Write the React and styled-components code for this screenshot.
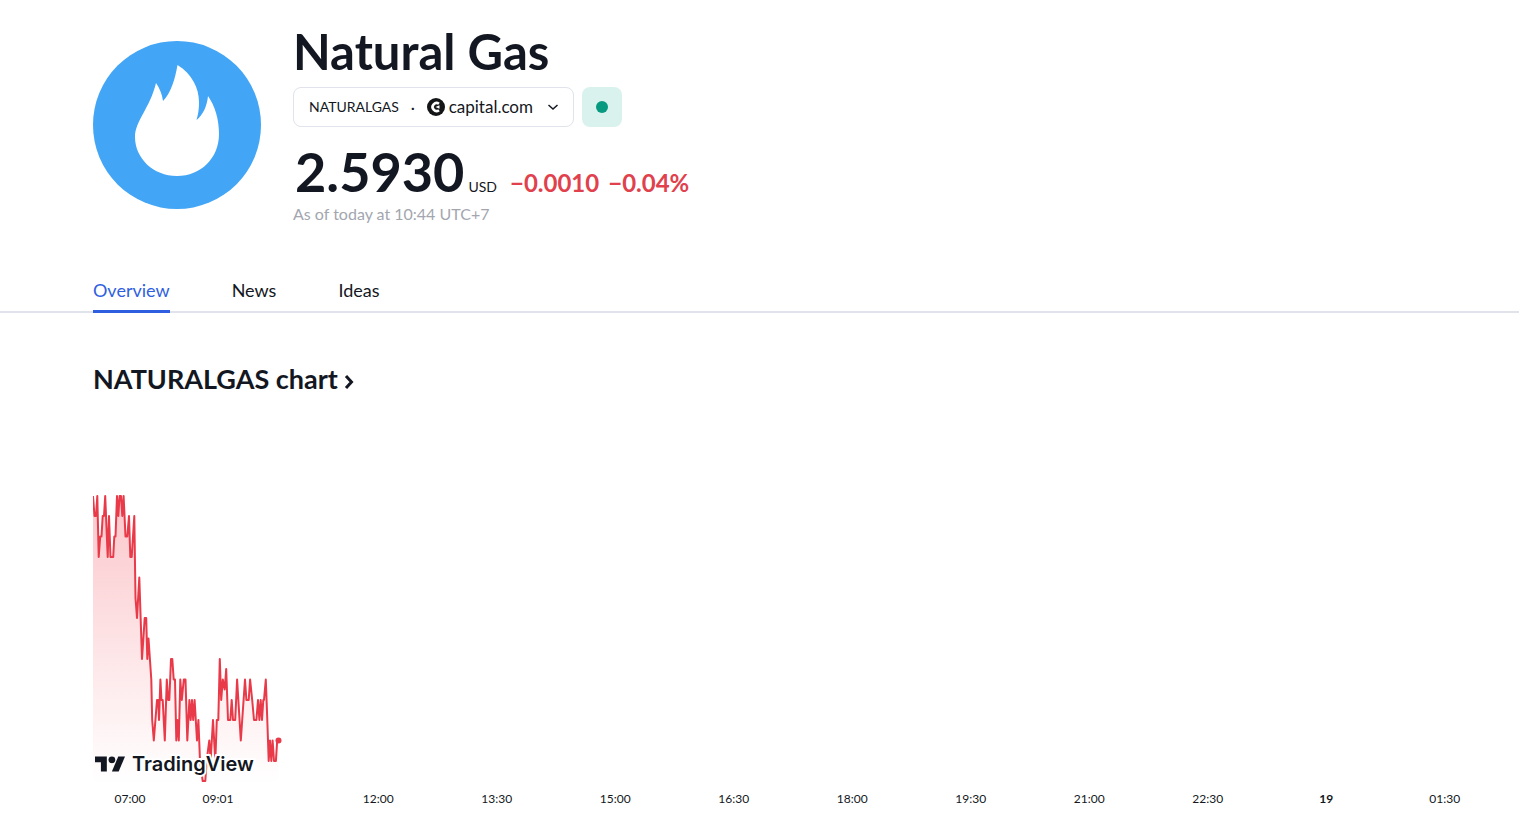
import React from "react";
import styled, { createGlobalStyle } from "styled-components";

const Global = createGlobalStyle`
  *, *::before, *::after { box-sizing: border-box; }
  body {
    margin: 0;
    background: #fff;
    color: #131722;
    font-family: Lato, "Open Sans", sans-serif;
    font-size: 16px;
    line-height: 24px;
  }
`;

const Page = styled.main`
  overflow-x: hidden;
`;

const Header = styled.header`
  display: flex;
  gap: 32px;
  padding: 23px 16px 0 93px;
`;

const SymbolLogo = styled.svg`
  flex: none;
  width: 168px;
  height: 168px;
  margin-top: 18px;
`;

const Summary = styled.div`
  display: flex;
  flex-direction: column;
  min-width: 0;
`;

const Title = styled.h1`
  margin: 0;
  font-size: 49px;
  font-weight: 700;
  line-height: 56px;
`;

const SymbolRow = styled.div`
  display: flex;
  gap: 8px;
  margin-top: 8px;
`;

const ExchangeButton = styled.button`
  display: flex;
  align-items: center;
  width: 281px;
  height: 40px;
  padding: 0 14px 0 15px;
  border: 1px solid #e0e3eb;
  border-radius: 8px;
  background: #fff;
  color: inherit;
  font: inherit;
  cursor: pointer;
`;

const Ticker = styled.span`
  font-size: 14px;
`;

const Separator = styled.span`
  flex: 1;
  text-align: center;
`;

const Exchange = styled.span`
  display: flex;
  align-items: center;
  gap: 4px;
  font-size: 17px;
`;

const Chevron = styled.svg`
  width: 12px;
  height: 8px;
  margin-left: 14px;
`;

const MarketStatus = styled.button`
  display: grid;
  place-items: center;
  width: 40px;
  height: 40px;
  padding: 0;
  border: 0;
  border-radius: 8px;
  background: #daf2ee;
  cursor: pointer;

  &::before {
    content: "";
    width: 12px;
    height: 12px;
    border-radius: 50%;
    background: #089981;
  }
`;

const Quote = styled.div`
  display: flex;
  align-items: baseline;
  margin-top: 17px;
  padding-left: 2px;
  line-height: 24px;
  white-space: nowrap;
`;

const Price = styled.span`
  font-size: 54px;
  font-weight: 700;
  line-height: 56px;
`;

const Currency = styled.span`
  margin-left: 4px;
  font-size: 14px;
`;

const Change = styled.span`
  display: flex;
  gap: 9px;
  margin-left: 13px;
  color: #e0414c;
  font-size: 24px;
  font-weight: 700;
`;

const AsOf = styled.p`
  margin: 2px 0 0;
  color: #a3a6af;
  font-size: 16px;
`;

const Tabs = styled.nav`
  display: flex;
  gap: 62px;
  margin-top: 49px;
  padding-left: 93px;
  box-shadow: inset 0 -2px #e0e3eb;
`;

const Tab = styled.a`
  height: 38px;
  border-bottom: 3px solid ${(p) => (p.$active ? "#2f5fe0" : "transparent")};
  color: ${(p) => (p.$active ? "#2f5fe0" : "#131722")};
  font-size: 18px;
  line-height: 30px;
  text-decoration: none;
`;

const ChartSection = styled.section`
  padding: 48px 15px 0 93px;
`;

const ChartTitle = styled.h2`
  margin: 0;
  font-size: 27px;
  font-weight: 700;
  line-height: 36px;
`;

const TitleLink = styled.a`
  display: flex;
  align-items: center;
  gap: 6px;
  width: fit-content;
  color: inherit;
  text-decoration: none;
`;

const TitleArrow = styled.svg`
  width: 10px;
  height: 16px;
  margin-top: 6px;
`;

const Plot = styled.div`
  position: relative;
  height: 303px;
  margin-top: 84px;
`;

const Series = styled.svg`
  display: block;
  width: 200px;
  height: 303px;
`;

const Brand = styled.a`
  position: absolute;
  left: 2px;
  bottom: 8px;
  display: flex;
  align-items: center;
  gap: 7px;
  color: #131722;
  font-family: Inter, sans-serif;
  font-size: 20px;
  font-weight: 600;
  text-decoration: none;
  paint-order: stroke fill;
  -webkit-text-stroke: 4px #fff;

  svg {
    overflow: visible;
  }
`;

const TimeAxis = styled.div`
  display: grid;
  grid-template-columns: 148fr 204fr 100fr repeat(10, 237fr);
  margin-top: 5px;
  font-size: 12px;
  line-height: 20px;
  text-align: center;
`;

const Tick = styled.span`
  font-weight: ${(p) => (p.$major ? 700 : 400)};
`;

const points = [
  [93, 496], [94.5, 516], [96, 516], [97.3, 496], [98.7, 557], [100.2, 536.5], [101.5, 536.5],
  [102.7, 516], [104, 516], [105.2, 496], [107.7, 557], [109, 516], [110.5, 557], [113.2, 557],
  [114.3, 536.5], [115.5, 536.5], [117, 496], [118.3, 516], [119.6, 496], [121, 496], [122.3, 516],
  [123.6, 496], [125.5, 536.5], [127.3, 536.5], [129, 516], [130.3, 557], [131.7, 557], [134.3, 516],
  [135.5, 598], [137, 618], [139.3, 577.5], [142, 659], [144.7, 618], [146.2, 618], [147.3, 659],
  [148.5, 638.5], [151.3, 679.5], [152.2, 720], [153.8, 740.5], [157, 700], [158.2, 700], [159, 720],
  [160.4, 679.5], [161.5, 700], [162.7, 700], [164.8, 740.5], [166.8, 679.5], [168.2, 700],
  [169.3, 700], [171, 659], [172.3, 659], [173.7, 679.5], [175, 679.5], [176.3, 740.5], [177.4, 720],
  [178.8, 740.5], [180.3, 679.5], [181.8, 700], [183.8, 679.5], [185.5, 679.5], [187.3, 740.5],
  [189.4, 700], [190.7, 720], [192, 700], [193.2, 720], [194.6, 700], [197, 740.5], [198.4, 720],
  [200, 761], [202.7, 781], [205.3, 781], [206.6, 761], [209.3, 740.5], [210.6, 761], [213, 720],
  [215.3, 761], [216.8, 720], [218.3, 720], [219.8, 659], [221.2, 700], [222.8, 679.5],
  [224.7, 689.5], [226.2, 669], [228, 720], [230.3, 720], [231.7, 700], [233, 720], [235.2, 720],
  [237.1, 679.5], [240.8, 740.5], [245, 679.5], [246.4, 700], [248.7, 700], [250.1, 679.5],
  [252.2, 700], [254, 720], [256.4, 720], [258, 700], [259.4, 720], [260.7, 700], [262, 720],
  [263.3, 700], [264, 700], [265.8, 679.5], [267.3, 720], [268.7, 761], [270, 740.5], [271.3, 761],
  [272.6, 740.5], [274, 761], [275.9, 761], [277.2, 740.5], [278.5, 740.5],
];
const line = points.map(([x, y]) => `${x},${y}`).join(" ");

const ticks = ["07:00", "09:01", "", "12:00", "13:30", "15:00", "16:30", "18:00", "19:30", "21:00", "22:30", "19", "01:30"];

export default function App() {
  return (
    <Page>
      <Global />
      <Header>
        <SymbolLogo viewBox="0 0 168 168" aria-hidden="true">
          <circle cx="84" cy="84" r="84" fill="#42a5f5" />
          <path
            fill="#fff"
            d="M84.500 24C99 33 106 47 106 61C106 69 105 74 103.500 79C110 74 114 65 115 55C122 65 126 78 126 93C126 117 108 135 84 135C60 135 42 117 42 96C42 80 57 67 63 42C67 48 69 53 70 60C78 52 82 38 84.500 24Z"
          />
        </SymbolLogo>
        <Summary>
          <Title>Natural Gas</Title>
          <SymbolRow>
            <ExchangeButton type="button">
              <Ticker>NATURALGAS</Ticker>
              <Separator>·</Separator>
              <Exchange>
                <svg width="18" height="18" viewBox="0 0 18 18" aria-hidden="true">
                  <circle cx="9" cy="9" r="9" fill="#131516" />
                  <path d="M12 5.800A4 4 0 1 0 12 12.200" fill="none" stroke="#fff" strokeWidth="2.600" />
                  <path d="M12.500 7.200L8.500 9L12.500 10.800Z" fill="#fff" />
                </svg>
                capital.com
              </Exchange>
              <Chevron viewBox="0 0 12 8" aria-hidden="true">
                <path d="M1.500 2L6 6L10.500 2" fill="none" stroke="#131722" strokeWidth="1.500" />
              </Chevron>
            </ExchangeButton>
            <MarketStatus type="button" aria-label="Market open" />
          </SymbolRow>
          <Quote>
            <Price>2.5930</Price>
            <Currency>USD</Currency>
            <Change>
              <span>−0.0010</span>
              <span>−0.04%</span>
            </Change>
          </Quote>
          <AsOf>As of today at 10:44 UTC+7</AsOf>
        </Summary>
      </Header>
      <Tabs>
        <Tab href="#overview" $active aria-current="page">Overview</Tab>
        <Tab href="#news">News</Tab>
        <Tab href="#ideas">Ideas</Tab>
      </Tabs>
      <ChartSection>
        <ChartTitle>
          <TitleLink href="#chart">
            NATURALGAS chart
            <TitleArrow viewBox="0 0 10 16" aria-hidden="true">
              <path d="M2 2L7.500 8L2 14" fill="none" stroke="#131722" strokeWidth="3" />
            </TitleArrow>
          </TitleLink>
        </ChartTitle>
        <Plot>
          <Series viewBox="93 481 200 303" role="img" aria-label="Natural gas price">
            <defs>
              <linearGradient id="fall" gradientUnits="userSpaceOnUse" x1="0" y1="496" x2="0" y2="784">
                <stop offset="0" stopColor="#f23645" stopOpacity="0.28" />
                <stop offset="1" stopColor="#f23645" stopOpacity="0" />
              </linearGradient>
            </defs>
            <polygon points={`93,784 ${line} 278.500,784`} fill="url(#fall)" />
            <polyline points={line} fill="none" stroke="#e93a49" strokeWidth="2" strokeLinejoin="round" />
            <circle cx="278.500" cy="740.500" r="3" fill="#e93a49" />
          </Series>
          <Brand href="#tradingview">
            <svg width="30" height="16" viewBox="0 4 35.500 18" aria-hidden="true">
              <g fill="#131722">
                <path d="M14 22H7V11H0V4H14Z" />
                <circle cx="20" cy="8" r="4" />
                <path d="M28 22H20L27.500 4H35.500Z" />
              </g>
            </svg>
            TradingView
          </Brand>
        </Plot>
        <TimeAxis>
          {ticks.map((t, i) => (
            <Tick key={i} $major={t === "19"}>{t}</Tick>
          ))}
        </TimeAxis>
      </ChartSection>
    </Page>
  );
}
